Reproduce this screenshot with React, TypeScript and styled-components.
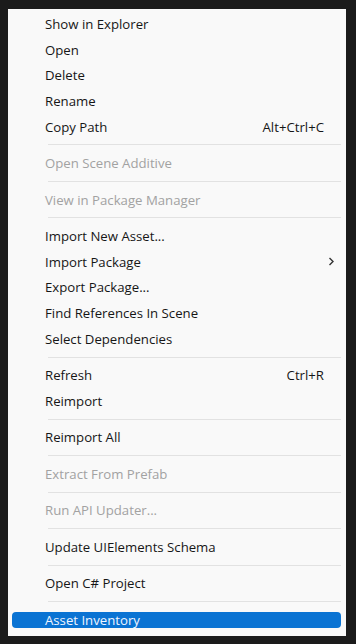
import React from 'react';
import styled, { createGlobalStyle } from 'styled-components';

const GlobalStyle = createGlobalStyle`
  html, body {
    margin: 0;
    padding: 0;
    background: #1b1b1b;
    height: 644px;
    overflow: hidden;
  }
`;

const Page = styled.div`
  padding: 9px 9px 0 8px;
  font-family: 'Open Sans', 'Noto Sans', sans-serif;
  font-size: 13.2px;
`;

const Menu = styled.div`
  width: 338px;
  height: 627px;
  box-sizing: border-box;
  background: #f9f9f9;
  padding: 2px 0 4px;
  display: flex;
  flex-direction: column;
`;

const Row = styled.div<{ $disabled?: boolean }>`
  height: 25.7px;
  display: flex;
  align-items: center;
  padding: 0 0 0 37px;
  color: ${(p) => (p.$disabled ? '#a2a2a2' : '#161616')};
  flex-shrink: 0;
`;

const Label = styled.span`
  flex: 1;
  white-space: nowrap;
`;

const Shortcut = styled.span`
  margin-right: 22px;
  white-space: nowrap;
`;

const Arrow = styled.span`
  margin-right: 11px;
  display: flex;
  align-items: center;
`;

const HighlightRow = styled.div`
  height: 25.7px;
  display: flex;
  align-items: center;
  padding: 0 5px 0 4px;
  flex-shrink: 0;
`;

const Highlight = styled.div`
  flex: 1;
  height: 16px;
  border-radius: 4px;
  background: #0a73d3;
  color: #eef5ff;
  padding-left: 33px;
  display: flex;
  align-items: center;
`;

const Separator = styled.div`
  height: 10.8px;
  display: flex;
  align-items: center;
  padding: 0 5px 0 40px;
  flex-shrink: 0;
  &::after {
    content: '';
    flex: 1;
    height: 1px;
    background: #e2e2e2;
  }
`;

type Entry =
  | { label: string; disabled?: boolean; shortcut?: string; sub?: boolean }
  | 'sep';

const entries: Entry[] = [
  { label: 'Show in Explorer' },
  { label: 'Open' },
  { label: 'Delete' },
  { label: 'Rename' },
  { label: 'Copy Path', shortcut: 'Alt+Ctrl+C' },
  'sep',
  { label: 'Open Scene Additive', disabled: true },
  'sep',
  { label: 'View in Package Manager', disabled: true },
  'sep',
  { label: 'Import New Asset...' },
  { label: 'Import Package', sub: true },
  { label: 'Export Package...' },
  { label: 'Find References In Scene' },
  { label: 'Select Dependencies' },
  'sep',
  { label: 'Refresh', shortcut: 'Ctrl+R' },
  { label: 'Reimport' },
  'sep',
  { label: 'Reimport All' },
  'sep',
  { label: 'Extract From Prefab', disabled: true },
  'sep',
  { label: 'Run API Updater...', disabled: true },
  'sep',
  { label: 'Update UIElements Schema' },
  'sep',
  { label: 'Open C# Project' },
  'sep',
];

function Chevron() {
  return (
    <svg width="7" height="9" viewBox="0 0 7 9">
      <path d="M1.5 1 L5 4.5 L1.5 8" fill="none" stroke="#333" strokeWidth="1.4" />
    </svg>
  );
}

export default function App() {
  return (
    <Page>
      <GlobalStyle />
      <Menu>
        {entries.map((e, i) =>
          e === 'sep' ? (
            <Separator key={i} />
          ) : (
            <Row key={i} $disabled={e.disabled}>
              <Label>{e.label}</Label>
              {e.shortcut && <Shortcut>{e.shortcut}</Shortcut>}
              {e.sub && (
                <Arrow>
                  <Chevron />
                </Arrow>
              )}
            </Row>
          )
        )}
        <HighlightRow>
          <Highlight>Asset Inventory</Highlight>
        </HighlightRow>
      </Menu>
    </Page>
  );
}
